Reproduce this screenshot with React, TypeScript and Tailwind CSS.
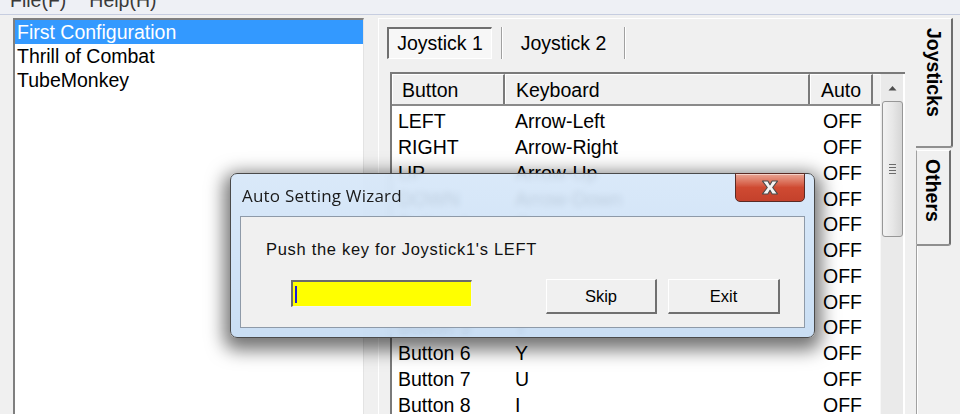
import React from "react";

type Row = {
  button: string;
  key: string;
  auto: string;
};

const rows: Row[] = [
  { button: "LEFT", key: "Arrow-Left", auto: "OFF" },
  { button: "RIGHT", key: "Arrow-Right", auto: "OFF" },
  { button: "UP", key: "Arrow-Up", auto: "OFF" },
  { button: "DOWN", key: "Arrow-Down", auto: "OFF" },
  { button: "Button 1", key: "Q", auto: "OFF" },
  { button: "Button 2", key: "W", auto: "OFF" },
  { button: "Button 3", key: "E", auto: "OFF" },
  { button: "Button 4", key: "R", auto: "OFF" },
  { button: "Button 5", key: "T", auto: "OFF" },
  { button: "Button 6", key: "Y", auto: "OFF" },
  { button: "Button 7", key: "U", auto: "OFF" },
  { button: "Button 8", key: "I", auto: "OFF" },
];

const configs = ["First Configuration", "Thrill of Combat", "TubeMonkey"];

function ConfigList() {
  return (
    <div className="w-[351px] h-full bg-white border-t-2 border-l-2 border-[#7f7f7f] border-r border-r-[#e3e3e3]">
      {configs.map((name, i) => (
        <div
          key={name}
          className={
            i === 0
              ? "h-[24px] leading-[24px] pl-[2px] bg-[#3399ff] text-white"
              : "h-[24px] leading-[24px] pl-[2px] text-black"
          }
        >
          {name}
        </div>
      ))}
    </div>
  );
}

function ScrollBar() {
  return (
    <div className="w-[23px] h-full bg-[#eaeaea] border-l border-[#f7f7f7] flex flex-col items-center">
      <div className="h-[27px] w-full flex items-center justify-center">
        <svg width="9" height="6" viewBox="0 0 9 6">
          <path d="M0.5 5.5 L4.5 1 L8.5 5.5 Z" fill="#4d4d4d" />
        </svg>
      </div>
      <div className="w-[21px] h-[136px] rounded-[3px] border border-[#979797] bg-gradient-to-r from-[#f3f3f3] via-[#e7e7e7] to-[#d6d6d6] flex items-center justify-center">
        <div className="flex flex-col gap-[2px]">
          <div className="w-[7px] h-px bg-[#6b6b6b]" />
          <div className="w-[7px] h-px bg-[#6b6b6b]" />
          <div className="w-[7px] h-px bg-[#6b6b6b]" />
          <div className="w-[7px] h-px bg-[#6b6b6b]" />
        </div>
      </div>
    </div>
  );
}

function KeyTable() {
  return (
    <div className="ml-[3px] mt-[13px] w-[515px] flex-1 flex bg-white border-t-2 border-l-2 border-[#7a7a7a]">
      <div className="w-[488px] flex flex-col">
        <div className="h-[32px] flex bg-[#f0f0f0] border-b-2 border-[#8a8a8a]">
          <div className="w-[113px] pl-[9px] leading-[30px] border-t border-l border-white border-r-2 border-r-[#7a7a7a]">
            Button
          </div>
          <div className="w-[305px] pl-[10px] leading-[30px] border-t border-l border-white border-r-2 border-r-[#7a7a7a]">
            Keyboard
          </div>
          <div className="w-[63px] pl-[10px] leading-[30px] border-t border-l border-white border-r-2 border-r-[#7a7a7a]">
            Auto
          </div>
          <div className="flex-1 border-t border-white" />
        </div>
        <div className="pt-[3px]">
          {rows.map((r) => (
            <div key={r.button} className="h-[25.75px] leading-[25.75px] flex">
              <div className="w-[113px] pl-[6px]">{r.button}</div>
              <div className="w-[305px] pl-[10px]">{r.key}</div>
              <div className="w-[63px] pl-[13px]">{r.auto}</div>
            </div>
          ))}
        </div>
      </div>
      <ScrollBar />
    </div>
  );
}

function TabPanel() {
  return (
    <div className="ml-[14px] w-[538px] h-full border-l border-t border-white flex flex-col pl-[8px] pt-[8px]">
      <div className="flex items-stretch h-[33px]">
        <div className="w-[105px] flex items-center justify-center bg-[#f7f7f7] border-t-2 border-l-2 border-[#6f6f6f] border-r border-b border-r-white border-b-white">
          Joystick 1
        </div>
        <div className="ml-[9px] flex">
          <div className="w-px bg-[#a0a0a0]" />
          <div className="w-px bg-white" />
        </div>
        <div className="w-[121px] flex items-center justify-center">Joystick 2</div>
        <div className="flex">
          <div className="w-px bg-[#a0a0a0]" />
          <div className="w-px bg-white" />
        </div>
      </div>
      <KeyTable />
    </div>
  );
}

function SideTabs() {
  return (
    <div className="w-[44px] h-full flex flex-col font-bold">
      <div className="w-[37px] h-[130px] bg-[#f0f0f0] border-t border-t-white border-r-2 border-r-[#6f6f6f] border-b-2 border-b-[#8f8f8f] rounded-br-[3px] flex justify-center pt-[9px]">
        <span className="[writing-mode:vertical-rl] leading-[22px]">Joysticks</span>
      </div>
      <div className="w-[35px] h-[96px] mt-[2px] bg-[#f0f0f0] border-l border-l-[#a0a0a0] border-t border-t-white border-r-2 border-r-[#6f6f6f] border-b-2 border-b-[#8f8f8f] rounded-br-[3px] flex justify-center pt-[8px]">
        <span className="[writing-mode:vertical-rl] leading-[22px]">Others</span>
      </div>
      <div className="flex-1 border-l border-[#a0a0a0]">
        <div className="h-full border-l border-white" />
      </div>
    </div>
  );
}

function WizardDialog() {
  return (
    <div className="absolute left-[230px] top-[173px] w-[585px] h-[165px] rounded-[7px] border border-[#4a4a4a] bg-gradient-to-b from-[#d6e7f9]/90 to-[#c4dbf3]/90 backdrop-blur-[3px] shadow-[0_6px_18px_6px_rgba(0,0,0,0.55)] font-['Liberation_Sans',Arial,sans-serif] text-[16.5px] flex flex-col">
      <div className="h-[42px] flex items-start">
        <div className="pl-[11px] pt-[9px] text-[17px] text-[#1a1a1a] font-['Open_Sans','Noto_Sans',sans-serif] tracking-[0.2px]">
          Auto Setting Wizard
        </div>
        <div className="ml-auto mr-[9px] -mt-px w-[70px] h-[29px] rounded-b-[5px] border border-[#5a2a24] bg-gradient-to-b from-[#e8a493] via-[#cf4a32] to-[#c4412b] flex items-center justify-center shadow-[inset_0_1px_0_rgba(255,255,255,0.5)]">
          <svg width="20" height="15" viewBox="0 0 18 14">
            <path
              d="M2 1 L7 1 L9 4.5 L11 1 L16 1 L11.5 7 L16 13 L11 13 L9 9.5 L7 13 L2 13 L6.5 7 Z"
              fill="#f4f4f4"
              stroke="#4a4a4a"
              strokeWidth="1"
              strokeLinejoin="round"
            />
          </svg>
        </div>
      </div>
      <div className="mx-[9px] mb-[9px] flex-1 bg-[#f0f0f0] border border-[#8e9aa8] flex flex-col pl-[25px] pt-[22px]">
        <div className="leading-[20px] text-[#111] tracking-[0.7px]">Push the key for Joystick1's LEFT</div>
        <div className="flex items-start mt-[20px]">
          <div className="ml-[25px] mt-px w-[181px] h-[27px] bg-[#ffff00] border-t-2 border-l-2 border-[#6b6b6b] border-r border-b border-r-[#f4f4f4] border-b-[#f4f4f4] flex items-center pl-[2px]">
            <div className="w-[2px] h-[17px] bg-[#1b1bd8]" />
          </div>
          <button className="ml-[74px] w-[111px] h-[35px] bg-[#f0f0f0] border-t border-l border-white border-r-2 border-b-2 border-r-[#707070] border-b-[#707070]">
            Skip
          </button>
          <button className="ml-[11px] w-[112px] h-[35px] bg-[#f0f0f0] border-t border-l border-white border-r-2 border-b-2 border-r-[#707070] border-b-[#707070]">
            Exit
          </button>
        </div>
      </div>
    </div>
  );
}

export default function App() {
  return (
    <div className="relative w-[960px] h-[414px] overflow-hidden bg-[#f0f0f0] text-black text-[19.5px] font-['Liberation_Sans',Arial,sans-serif]">
      <div className="h-[15px] overflow-hidden bg-[#eef0f5] border-b border-[#c6cde0] flex pl-[10px] gap-[23px] text-[#3a3a3a]">
        <span className="-mt-[11px] leading-[22px]">File(F)</span>
        <span className="-mt-[11px] leading-[22px]">Help(H)</span>
      </div>
      <div className="h-[399px] flex pt-[3px] pl-[13px]">
        <ConfigList />
        <TabPanel />
        <SideTabs />
      </div>
      <WizardDialog />
    </div>
  );
}
